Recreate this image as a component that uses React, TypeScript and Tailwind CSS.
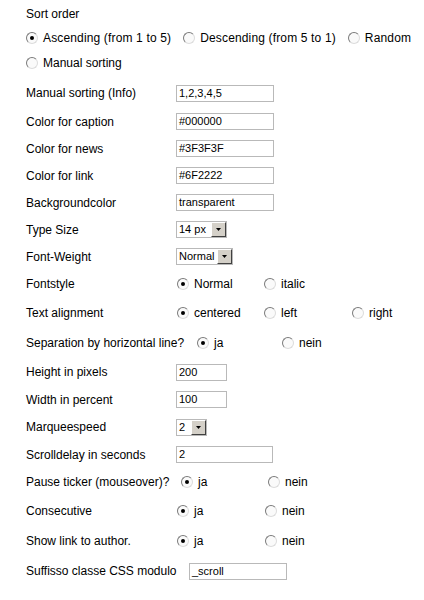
import React from 'react';

const Radio = ({ checked }: { checked?: boolean }) => (
  <span className="inline-flex items-center justify-center w-[12px] h-[12px] shrink-0 rounded-full border border-t-[#7a7a7a] border-l-[#7a7a7a] border-r-[#dcdcdc] border-b-[#dcdcdc] bg-[#fafafa]">
    {checked && <span className="w-[4px] h-[4px] rounded-full bg-black" />}
  </span>
);

const Option = ({ label, checked, className = '' }: { label: string; checked?: boolean; className?: string }) => (
  <span className={`flex items-center gap-[5px] ${className}`}>
    <Radio checked={checked} />
    <span>{label}</span>
  </span>
);

const TextInput = ({ value, width }: { value: string; width: string }) => (
  <span
    className={`flex items-center h-[17px] border border-[#b9b9b9] bg-white pl-[2px] text-[11px] leading-none text-black ${width}`}
  >
    {value}
  </span>
);

const Select = ({ value, width }: { value: string; width: string }) => (
  <span className={`flex items-center h-[17px] border border-[#b9b9b9] bg-white ${width}`}>
    <span className="flex-1 pl-[2px] text-[11px] leading-none">{value}</span>
    <span className="flex items-center justify-center w-[15px] h-[15px] bg-[#d4d0c8] border border-t-white border-l-white border-r-[#404040] border-b-[#404040]">
      <svg width="5" height="3" viewBox="0 0 5 3">
        <path d="M0 0h5L2.5 3z" fill="#000" />
      </svg>
    </span>
  </span>
);

const Row = ({ h, label, children }: { h: string; label: string; children: React.ReactNode }) => (
  <div className={`flex items-center ${h}`}>
    <span className="w-[150px] shrink-0">{label}</span>
    {children}
  </div>
);

export default function App() {
  return (
    <div className="w-[424px] h-[600px] bg-white text-black pl-[26px] text-[12px] leading-[14px] font-['Liberation_Sans',Arial,sans-serif]">
      <div className="flex items-center h-[28px]">Sort order</div>
      <div className="flex items-center h-[20px] gap-[12px] tracking-[0.15px]">
        <Option label="Ascending (from 1 to 5)" checked />
        <Option label="Descending (from 5 to 1)" />
        <Option label="Random" />
      </div>
      <div className="flex items-center h-[30px]">
        <Option label="Manual sorting" />
      </div>

      <Row h="h-[30px]" label="Manual sorting (Info)">
        <TextInput value="1,2,3,4,5" width="w-[98px]" />
      </Row>
      <Row h="h-[27px]" label="Color for caption">
        <TextInput value="#000000" width="w-[98px]" />
      </Row>
      <Row h="h-[27px]" label="Color for news">
        <TextInput value="#3F3F3F" width="w-[98px]" />
      </Row>
      <Row h="h-[27px]" label="Color for link">
        <TextInput value="#6F2222" width="w-[98px]" />
      </Row>
      <Row h="h-[27px]" label="Backgroundcolor">
        <TextInput value="transparent" width="w-[98px]" />
      </Row>
      <Row h="h-[27px]" label="Type Size">
        <Select value="14 px" width="w-[51px]" />
      </Row>
      <Row h="h-[27px]" label="Font-Weight">
        <Select value="Normal" width="w-[57px]" />
      </Row>
      <Row h="h-[28px]" label="Fontstyle">
        <Option label="Normal" checked className="w-[88px] pl-[1px]" />
        <Option label="italic" />
      </Row>
      <Row h="h-[30px]" label="Text alignment">
        <Option label="centered" checked className="w-[88px] pl-[1px]" />
        <Option label="left" className="w-[88px]" />
        <Option label="right" />
      </Row>
      <div className="flex items-center h-[30px]">
        <span className="w-[171px] shrink-0">Separation by horizontal line?</span>
        <Option label="ja" checked className="w-[85px]" />
        <Option label="nein" />
      </div>
      <Row h="h-[28px]" label="Height in pixels">
        <TextInput value="200" width="w-[51px]" />
      </Row>
      <Row h="h-[27px]" label="Width in percent">
        <TextInput value="100" width="w-[51px]" />
      </Row>
      <Row h="h-[28px]" label="Marqueespeed">
        <Select value="2" width="w-[31px]" />
      </Row>
      <Row h="h-[27px]" label="Scrolldelay in seconds">
        <TextInput value="2" width="w-[97px]" />
      </Row>
      <div className="flex items-center h-[28px]">
        <span className="w-[155px] shrink-0">Pause ticker (mouseover)?</span>
        <Option label="ja" checked className="w-[87px]" />
        <Option label="nein" />
      </div>
      <Row h="h-[30px]" label="Consecutive">
        <Option label="ja" checked className="w-[89px] pl-[1px]" />
        <Option label="nein" />
      </Row>
      <Row h="h-[30px]" label="Show link to author.">
        <Option label="ja" checked className="w-[89px] pl-[1px]" />
        <Option label="nein" />
      </Row>
      <div className="flex items-center h-[30px]">
        <span className="w-[163px] shrink-0">Suffisso classe CSS modulo</span>
        <TextInput value="_scroll" width="w-[98px]" />
      </div>
    </div>
  );
}
